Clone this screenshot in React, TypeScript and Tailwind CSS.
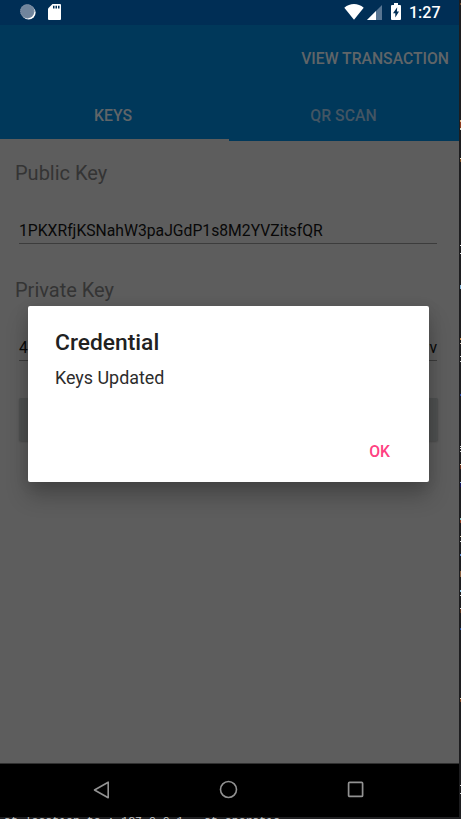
const edgeMarks = [
  { y: 3, h: 2, c: '#6b4a30' },
  { y: 120, h: 2, c: '#d8b48a' },
  { y: 122, h: 6, c: '#8e3b1e' },
  { y: 128, h: 2, c: '#cfd6c4' },
  { y: 158, h: 1, c: '#e8dcc0' },
  { y: 159, h: 3, c: '#7a4a20' },
  { y: 245, h: 1, c: '#e6e6e6' },
  { y: 253, h: 1, c: '#e6e6e6' },
  { y: 285, h: 4, c: '#86b7d8' },
  { y: 338, h: 2, c: '#c98a4a' },
  { y: 343, h: 1, c: '#d8c8b8' },
  { y: 356, h: 1, c: '#d8d8d8' },
  { y: 361, h: 1, c: '#d8d8d8' },
  { y: 394, h: 2, c: '#2648a8' },
  { y: 446, h: 1, c: '#d8d8d8' },
  { y: 448, h: 1, c: '#d8d8d8' },
  { y: 451, h: 1, c: '#d8d8d8' },
  { y: 464, h: 1, c: '#e8dcc0' },
  { y: 465, h: 4, c: '#6a2c18' },
  { y: 482, h: 1, c: '#9cc4e0' },
  { y: 483, h: 4, c: '#14145a' },
  { y: 518, h: 2, c: '#8cc0c0' },
  { y: 520, h: 3, c: '#8e3b1e' },
  { y: 536, h: 1, c: '#e0d0b0' },
  { y: 541, h: 1, c: '#e0e0e0' },
  { y: 554, h: 2, c: '#5a8ad0' },
  { y: 571, h: 6, c: '#8a6040' },
  { y: 590, h: 2, c: '#8cc0e0' },
  { y: 595, h: 1, c: '#d8d8d8' },
  { y: 608, h: 1, c: '#d8d8d8' },
  { y: 609, h: 4, c: '#5a3018' },
  { y: 628, h: 2, c: '#2850a0' },
  { y: 698, h: 1, c: '#e0d0b0' },
  { y: 699, h: 3, c: '#7a4020' },
  { y: 785, h: 1, c: '#d8d8d8' },
  { y: 793, h: 1, c: '#d8d8d8' },
];

function StatusBar() {
  return (
    <div className="flex h-[25px] shrink-0 items-start bg-[#002e55]">
      <svg className="ml-5 mt-[4px] h-4 w-4" viewBox="0 0 16 16">
        <circle cx="8.6" cy="8.6" r="7" fill="#fff" />
        <circle cx="7.3" cy="7.3" r="7.1" fill="#71859c" />
        <circle cx="7.3" cy="7.3" r="6.6" fill="none" stroke="#8797ab" strokeWidth="1" strokeDasharray="1 1" />
      </svg>
      <svg className="ml-3 mt-[4px] h-4 w-[13px]" viewBox="0 0 13 16">
        <path d="M4.5 0H12a1 1 0 0 1 1 1v14a1 1 0 0 1-1 1H1a1 1 0 0 1-1-1V4.5Z" fill="#fff" />
        <path d="M5 1.8h1.5v2.8H5zM7.5 1.8H9v2.8H7.5zM10 1.8h1.5v2.8H10z" fill="#002e55" />
      </svg>
      <svg className="ml-[283px] mt-[4px] h-4 w-[20px]" viewBox="0 0 20 16">
        <path d="M0.3 3.7C6-1.1 14-1.1 19.7 3.7L10 15.8Z" fill="#fff" />
      </svg>
      <svg className="ml-[3px] mt-[5px] h-[15px] w-[15px]" viewBox="0 0 15 15">
        <path d="M15 0v15H0Z" fill="#587592" />
        <path d="M9 6v9H0Z" fill="#fff" />
      </svg>
      <svg className="ml-[9px] mt-[3px] h-[17px] w-[10px]" viewBox="0 0 10 17">
        <path d="M3 0h4v2h2q1 0 1 1v13q0 1-1 1H1q-1 0-1-1V3q0-1 1-1h2Z" fill="#fff" />
        <path d="M6.2 4.3 2 10.3h2.3v4.2L8 8.5H5.9Z" fill="#002e55" />
      </svg>
      <span className="ml-[8px] mt-px text-[16px] leading-6 font-medium text-white">1:27</span>
    </div>
  );
}

function NavBar() {
  return (
    <div className="flex h-[54px] shrink-0 items-center border-t border-[#303030] bg-black pb-[2px] pl-[93px]">
      <svg className="h-[18px] w-[17px]" viewBox="0 0 17 18" fill="none" stroke="#929292" strokeWidth="1.6">
        <path d="M15.2 1.2v15.6L1.5 9Z" strokeLinejoin="round" />
      </svg>
      <svg className="ml-[109px] h-[19px] w-[19px]" viewBox="0 0 19 19" fill="none" stroke="#929292" strokeWidth="1.6">
        <circle cx="9.5" cy="9.5" r="8" />
      </svg>
      <svg className="ml-[109px] h-[17px] w-[17px]" viewBox="0 0 17 17" fill="none" stroke="#929292" strokeWidth="1.7">
        <rect x="1.6" y="1.4" width="14" height="14" rx="1" />
      </svg>
    </div>
  );
}

function Dialog() {
  return (
    <section className="absolute top-[306px] left-[28px] flex h-[176px] w-[401px] flex-col rounded-[2px] bg-white pt-[23px] pl-[27px] shadow-[0_14px_22px_rgba(0,0,0,0.24),0_2px_14px_rgba(0,0,0,0.1)]">
      <h1 className="text-[22.8px] leading-7 font-medium text-[#212121]">Credential</h1>
      <p className="mt-[9px] text-[17.9px] leading-6 text-[#2c2c2c]">Keys Updated</p>
      <button className="mt-auto mr-[39px] mb-[18px] self-end text-[15.7px] leading-6 font-medium text-[#ff4081]">OK</button>
    </section>
  );
}

export default function App() {
  return (
    <div className="relative flex h-[819px] w-[461px] flex-col overflow-hidden bg-[#1d1d1f] font-['Roboto','Liberation_Sans',sans-serif]">
      <div className="flex h-[817px] w-[459px] flex-col">
        <StatusBar />
        <header className="flex h-[116px] shrink-0 flex-col bg-[#00385a] font-medium">
          <div className="flex h-[65px] items-center justify-end pt-[2px] pr-[10px] text-[15.72px] text-[#606568]">VIEW TRANSACTION</div>
          <div className="flex flex-1 text-[15.8px]">
            <div className="w-[229px] border-b-2 border-[#5d5d5d] pt-[3px] text-center leading-[46px] text-[#606568]">
              <span className="mr-[3px]">KEYS</span>
            </div>
            <div className="flex-1 pt-[3px] text-center leading-[46px] text-[#435563]">
              <span className="mr-px">QR SCAN</span>
            </div>
          </div>
        </header>
        <main className="flex flex-1 flex-col bg-[#5d5d5d] px-[15px] pt-[18px]">
          <label className="text-[20px] leading-7 text-[#343434]">Public Key</label>
          <div className="mt-[30px] mr-[7px] ml-1 h-[27px] border-b border-[#3c3c3c] text-[15.72px] leading-[28px] text-[#080808]">
            1PKXRfjKSNahW3paJGdP1s8M2YVZitsfQR
          </div>
          <label className="mt-[32px] text-[20px] leading-7 text-[#343434]">Private Key</label>
          <div className="mt-[30px] mr-[7px] ml-1 flex h-[27px] justify-between border-b border-[#3c3c3c] text-[15.72px] leading-[28px] text-[#080808]">
            <span>4</span>
            <span>v</span>
          </div>
          <div className="mt-[37px] mr-[6px] ml-1 h-[43px] rounded-[2px] bg-[#4f5151] shadow-[0_1px_2px_rgba(0,0,0,0.2)]" />
        </main>
        <NavBar />
      </div>
      <div className="h-[2px] overflow-hidden bg-[#202022]">
        <pre className="-mt-[2px] pl-1 font-['Liberation_Mono',monospace] text-[11.5px] leading-3 text-[#c5c5c5]">at location to : 127.0.0.1   at operatio</pre>
      </div>
      <Dialog />
      {edgeMarks.map((m) => (
        <i key={m.y} className="absolute right-0 w-px" style={{ top: m.y, height: m.h, background: m.c }} />
      ))}
    </div>
  );
}
